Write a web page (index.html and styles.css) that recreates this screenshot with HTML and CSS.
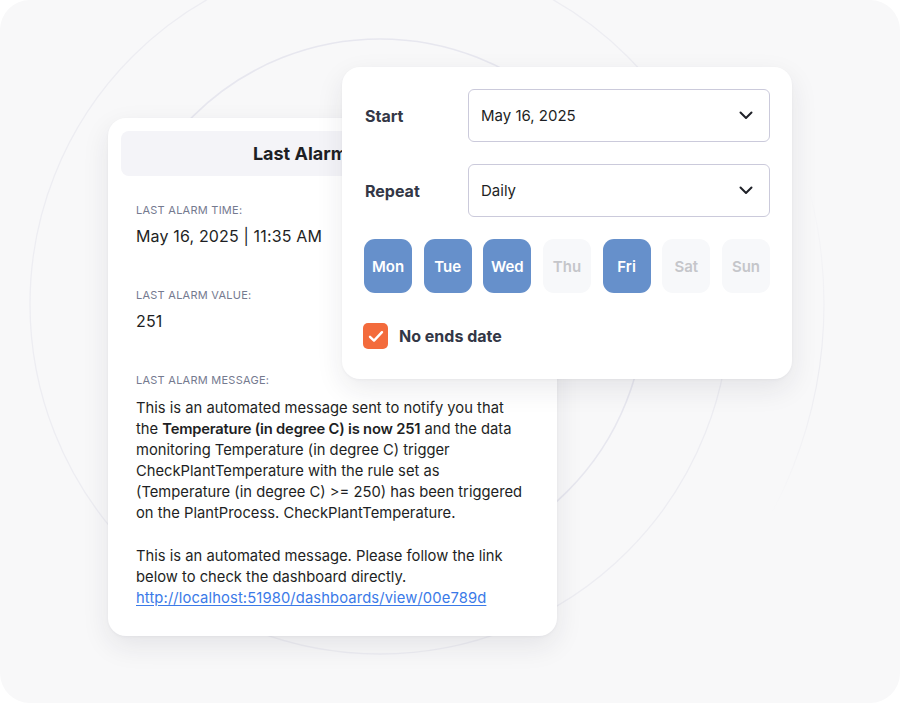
FILE: index.html
```html
<!DOCTYPE html>
<html lang="en">
<head>
<meta charset="utf-8">
<title>Alarm schedule</title>
<link rel="stylesheet" href="styles.css">
</head>
<body>
<div class="frame">
  <svg class="rings" width="900" height="703" viewBox="0 0 900 703" aria-hidden="true">
    <defs>
      <linearGradient id="fade" gradientUnits="userSpaceOnUse" x1="0" y1="180" x2="0" y2="600">
        <stop offset="0" stop-color="#ececf1" stop-opacity="0"/>
        <stop offset="0.45" stop-color="#ececf1" stop-opacity="1"/>
        <stop offset="0.8" stop-color="#ececf1" stop-opacity="0"/>
      </linearGradient>
    </defs>
    <circle cx="380" cy="304" r="444" fill="none" stroke="url(#fade)" stroke-width="1.2"/>
    <circle cx="380" cy="304" r="350" fill="none" stroke="#ededf2" stroke-width="1.3"/>
    <circle cx="380" cy="304" r="265" fill="none" stroke="#e7e7ef" stroke-width="1.6"/>
  </svg>

  <section class="alarm-card">
    <div class="alarm-head">Last Alarm Details</div>
    <div class="alarm-body">
      <div class="field">
        <div class="field-label">Last alarm time:</div>
        <div class="field-value">May 16, 2025 | 11:35 AM</div>
      </div>
      <div class="field">
        <div class="field-label">Last alarm value:</div>
        <div class="field-value">251</div>
      </div>
      <div class="field">
        <div class="field-label">Last alarm message:</div>
        <div class="message">
          <p>This is an automated message sent to notify you that the <b>Temperature (in degree C) is now 251</b> and the data monitoring Temperature (in degree C) trigger CheckPlantTemperature with the rule set as (Temperature (in degree C) &gt;= 250) has been triggered on the PlantProcess. CheckPlantTemperature.</p>
          <p>This is an automated message. Please follow the link below to check the dashboard directly. <a href="#">http://localhost:51980/dashboards/view/00e789d</a></p>
        </div>
      </div>
    </div>
  </section>

  <section class="schedule-card">
    <div class="row">
      <div class="row-label">Start</div>
      <div class="select"><span>May 16, 2025</span>
        <svg class="chev" width="14" height="9" viewBox="0 0 14 9"><path d="M1.5 1.5 L7 7 L12.5 1.5" fill="none" stroke="#1f2128" stroke-width="2" stroke-linecap="round" stroke-linejoin="round"/></svg>
      </div>
    </div>
    <div class="row">
      <div class="row-label">Repeat</div>
      <div class="select"><span>Daily</span>
        <svg class="chev" width="14" height="9" viewBox="0 0 14 9"><path d="M1.5 1.5 L7 7 L12.5 1.5" fill="none" stroke="#1f2128" stroke-width="2" stroke-linecap="round" stroke-linejoin="round"/></svg>
      </div>
    </div>
    <div class="days">
      <div class="day on">Mon</div>
      <div class="day on">Tue</div>
      <div class="day on">Wed</div>
      <div class="day">Thu</div>
      <div class="day on">Fri</div>
      <div class="day">Sat</div>
      <div class="day">Sun</div>
    </div>
    <div class="check-row">
      <span class="checkbox">
        <svg width="16" height="13" viewBox="0 0 16 13"><path d="M2 6.8 L6 10.6 L14 2.2" fill="none" stroke="#fff" stroke-width="2.4" stroke-linecap="round" stroke-linejoin="round"/></svg>
      </span>
      <span class="check-label">No ends date</span>
    </div>
  </section>
</div>
</body>
</html>
```

FILE: styles.css
```css
* { box-sizing: border-box; }
html, body {
  margin: 0;
  padding: 0;
  background: #ffffff;
}
body {
  font-family: Inter, "Noto Sans", "Liberation Sans", sans-serif;
  color: #1e1f24;
}
.frame {
  position: relative;
  width: 900px;
  height: 703px;
  border-radius: 30px;
  background: #f8f8f9;
  overflow: hidden;
  padding: 118px 0 0 108px;
}
.rings {
  position: absolute;
  left: 0;
  top: 0;
}

/* left card */
.alarm-card {
  position: relative;
  width: 449px;
  height: 518px;
  background: #ffffff;
  border-radius: 18px;
  padding: 13px;
  box-shadow: 0 10px 28px rgba(30, 32, 60, 0.09), 0 1px 3px rgba(30, 32, 60, 0.04);
}
.alarm-head {
  height: 45px;
  border-radius: 8px;
  background: #f4f4f8;
  display: flex;
  align-items: center;
  justify-content: center;
  font-size: 18px;
  font-weight: 700;
  color: #1e1f24;
  white-space: nowrap;
}
.alarm-body {
  padding: 27px 15px 0 15px;
  display: flex;
  flex-direction: column;
  gap: 41px;
}
.field-label {
  font-size: 11px;
  line-height: 14px;
  text-transform: uppercase;
  color: #757a8f;
  letter-spacing: 0.25px;
}
.field-value {
  margin-top: 8px;
  font-size: 16px;
  line-height: 22px;
  color: #1e1f24;
  letter-spacing: 0.15px;
}
.message {
  margin-top: 11px;
  font-size: 14.75px;
  line-height: 21px;
  color: #1e1f24;
  width: 389px;
}
.message p {
  margin: 0 0 22px 0;
}
.message p:last-child { margin-bottom: 0; }
.message b {
  font-weight: 600;
  letter-spacing: -0.2px;
}
.message a {
  color: #3b7ae8;
  text-decoration: underline;
  text-underline-offset: 2px;
  letter-spacing: 0.12px;
}

/* right card */
.schedule-card {
  position: absolute;
  left: 342px;
  top: 67px;
  width: 450px;
  height: 312px;
  background: #ffffff;
  border-radius: 18px;
  padding: 22px 22px 0 22px;
  box-shadow: 0 10px 28px rgba(30, 32, 60, 0.09), 0 1px 3px rgba(30, 32, 60, 0.04);
  display: flex;
  flex-direction: column;
}
.row {
  display: flex;
  align-items: center;
  margin-bottom: 22px;
}
.row-label {
  width: 104px;
  padding-left: 1px;
  font-size: 16px;
  font-weight: 700;
  color: #333746;
}
.select {
  flex: 1;
  height: 53px;
  border: 1px solid #cbcadb;
  border-radius: 6px;
  display: flex;
  align-items: center;
  justify-content: space-between;
  padding: 0 16px 0 12px;
  font-size: 15px;
  color: #1e1f24;
}
.chev { display: block; }
.days {
  display: flex;
  justify-content: space-between;
}
.day {
  width: 48px;
  height: 54px;
  border-radius: 11px;
  background: #f7f8fa;
  color: #c5c6ca;
  font-size: 15px;
  font-weight: 600;
  display: flex;
  align-items: center;
  justify-content: center;
}
.day.on {
  background: #6690cb;
  color: #ffffff;
}
.check-row {
  display: flex;
  align-items: center;
  margin-top: 30px;
}
.checkbox {
  width: 25px;
  height: 26px;
  margin-left: -1px;
  border-radius: 5px;
  background: #f36b3c;
  display: flex;
  align-items: center;
  justify-content: center;
}
.check-label {
  margin-left: 11px;
  font-size: 16px;
  font-weight: 700;
  color: #333746;
}
```
